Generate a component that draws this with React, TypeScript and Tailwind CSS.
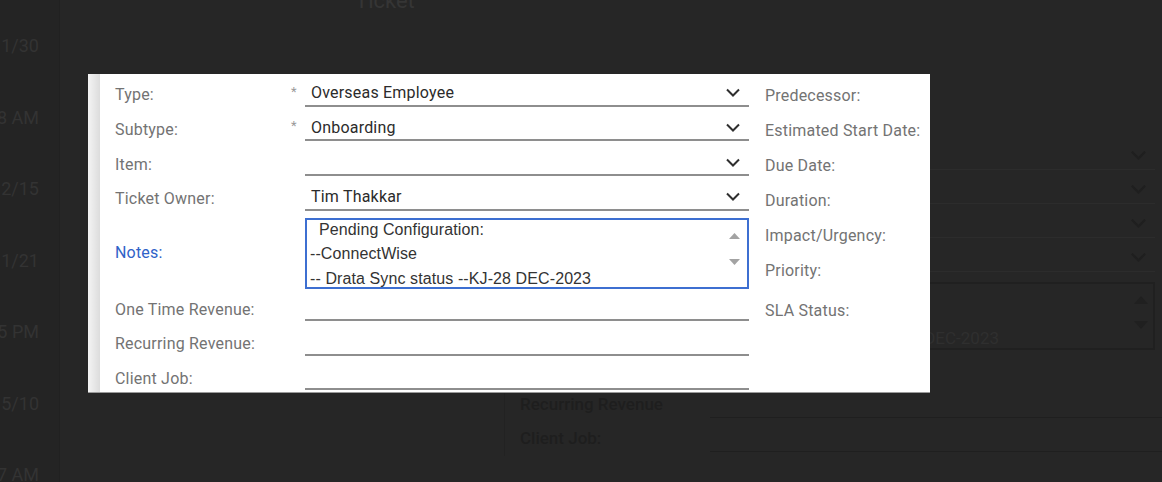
import React from "react";

type Row = {
  label: string;
  value?: string;
  required?: boolean;
  select?: boolean;
  h: string;
};

const topRows: Row[] = [
  { label: "Type:", value: "Overseas Employee", required: true, select: true, h: "h-[34.7px]" },
  { label: "Subtype:", value: "Onboarding", required: true, select: true, h: "h-[34.7px]" },
  { label: "Item:", select: true, h: "h-[34.7px]" },
  { label: "Ticket Owner:", value: "Tim Thakkar", select: true, h: "h-[34.7px]" },
];

const bottomRows: Row[] = [
  { label: "One Time Revenue:", h: "h-[32.7px]" },
  { label: "Recurring Revenue:", h: "h-[34.3px]" },
  { label: "Client Job:", h: "h-[34.3px]" },
];

const rightLabels = [
  "Predecessor:",
  "Estimated Start Date:",
  "Due Date:",
  "Duration:",
  "Impact/Urgency:",
  "Priority:",
];

const backdropTimes = ["11/30", "8 AM", "12/15", "11/21", "5 PM", "5/10", "7 AM"];

function Chevron({ className, color = "#2f2f2f" }: { className?: string; color?: string }) {
  return (
    <svg width="14" height="9" viewBox="0 0 14 9" className={className}>
      <path d="M1 1.5 L7 7.5 L13 1.5" fill="none" stroke={color} strokeWidth="2" />
    </svg>
  );
}

function FieldRow({ row }: { row: Row }) {
  return (
    <div className={`flex items-end ${row.h}`}>
      <div className="w-[173px] pb-[1.5px] leading-[20px] text-[#737373] whitespace-nowrap">
        {row.label}
      </div>
      <div className="w-[17px] self-end pb-[9px] pl-[3px] text-[13px] leading-[13px] text-[#9a9a9a]">
        {row.required ? "*" : ""}
      </div>
      <div className="flex h-full flex-1 items-end justify-between border-b-2 border-[#8e8e8e] pb-[1.5px] pl-[6px]">
        <span className="leading-[20px] text-[#2b2b2b]">{row.value ?? ""}</span>
        {row.select && <Chevron className="mb-[6px] mr-[9px]" />}
      </div>
    </div>
  );
}

function Backdrop() {
  return (
    <div className="flex h-full">
      {/* dimmed list on the left */}
      <div className="flex h-full w-[60px] flex-col overflow-hidden border-r border-[#212121] bg-[#242424] pt-[10px]">
        {backdropTimes.map((t) => (
          <div
            key={t}
            className="flex h-[71.5px] shrink-0 items-center justify-end whitespace-nowrap pr-[20px] text-[18px] text-[#333333]"
          >
            {t}
          </div>
        ))}
      </div>

      {/* dimmed form behind the dialog */}
      <div className="flex flex-1 flex-col">
        <div className="h-[74px] pl-[295px]">
          <div className="-mt-[12px] text-[22px] leading-[26px] text-[#353535]">Ticket</div>
        </div>
        <div className="flex h-[318px]">
          <div className="w-[760px]" />
          <div className="flex w-[335px] flex-col pt-[62px]">
            {[0, 1, 2, 3].map((i) => (
              <div key={i} className="flex h-[34px] items-end justify-end border-b border-[#2c2c2c] pb-[9px] pr-[8px]">
                <Chevron color="#1f1f1f" className="h-[10px] w-[17px]" />
              </div>
            ))}
            <div className="mt-[10px] flex h-[68px] border-2 border-[#202020]">
              <div className="flex flex-1 items-end justify-end overflow-hidden whitespace-nowrap pr-[130px] text-[17px] leading-[20px] text-[#2f2f2f]">
                -- Drata Sync status --KJ-28 DEC-2023
              </div>
              <div className="flex w-[24px] flex-col items-center pt-[12px]">
                <svg width="14" height="8" viewBox="0 0 14 8">
                  <path d="M0 8 L7 0 L14 8Z" fill="#202020" />
                </svg>
                <svg width="14" height="8" viewBox="0 0 14 8" className="mt-[17px]">
                  <path d="M0 0 L7 8 L14 0Z" fill="#202020" />
                </svg>
              </div>
            </div>
          </div>
        </div>
        <div className="flex">
          <div className="h-[64px] w-[445px] border-r border-[#222]" />
          <div className="flex flex-1 flex-col">
            <div className="flex h-[26px] items-end">
              <div className="w-[205px] pb-[1px] pl-[15px] text-[17px] font-medium text-[#1e1e1e] whitespace-nowrap">
                Recurring Revenue
              </div>
              <div className="flex-1 border-b border-[#1f1f1f]" />
            </div>
            <div className="flex h-[34px] items-end">
              <div className="w-[205px] pb-[1px] pl-[15px] text-[17px] font-medium text-[#1e1e1e]">
                Client Job:
              </div>
              <div className="flex-1 border-b border-[#1f1f1f]" />
            </div>
          </div>
        </div>
      </div>
    </div>
  );
}

export default function App() {
  return (
    <div className="relative h-[482px] w-[1162px] overflow-hidden bg-[#262626] font-['Roboto',sans-serif]">
      <Backdrop />

      {/* Ticket details dialog */}
      <div className="absolute left-[88px] top-[74px] flex h-[319px] w-[842px] overflow-hidden border-b border-[#9a9a9a] bg-white text-[16px] tracking-[0.2px]">
        <div className="h-full w-[12px] shrink-0 bg-gradient-to-r from-[#f4f4f4] to-[#dcdcdc]" />

        <div className="flex items-start pl-[15px]">
          {/* Left column */}
          <div className="-mt-[2px] flex w-[634px] flex-col">
            {topRows.map((r) => (
              <FieldRow key={r.label} row={r} />
            ))}

            <div className="mt-[7px] flex h-[71px] items-center">
              <div className="w-[190px] leading-[20px] text-[#2f62c8]">Notes:</div>
              <div className="flex h-full flex-1 overflow-hidden border-2 border-[#3d6fd1]">
                <div className="flex-1 overflow-hidden pl-[3px] font-['Liberation_Sans',Arial,sans-serif] text-[16px] leading-[24.4px] tracking-[0.1px] text-[#333]">
                  <div className="-mt-[2px]">
                    <div className="pl-[9px]">Pending Configuration:</div>
                    <div>--ConnectWise</div>
                    <div className="whitespace-nowrap">-- Drata Sync status --KJ-28 DEC-2023</div>
                  </div>
                </div>
                <div className="flex w-[26px] flex-col items-center">
                  <svg width="11" height="6" viewBox="0 0 11 6" className="mt-[13.7px]">
                    <path d="M0 6 L5.5 0 L11 6Z" fill="#a3a3a3" />
                  </svg>
                  <svg width="11" height="6" viewBox="0 0 11 6" className="mt-[20px]">
                    <path d="M0 0 L5.5 6 L11 0Z" fill="#a3a3a3" />
                  </svg>
                </div>
              </div>
            </div>

            {bottomRows.map((r) => (
              <FieldRow key={r.label} row={r} />
            ))}
          </div>

          {/* Right column */}
          <div className="ml-[16px] flex flex-col pt-[4px]">
            {rightLabels.map((l) => (
              <div key={l} className="flex h-[35px] items-center whitespace-nowrap text-[#737373]">
                {l}
              </div>
            ))}
            <div className="mt-[5px] flex h-[35px] items-center whitespace-nowrap text-[#737373]">
              SLA Status:
            </div>
          </div>
        </div>
      </div>
    </div>
  );
}
